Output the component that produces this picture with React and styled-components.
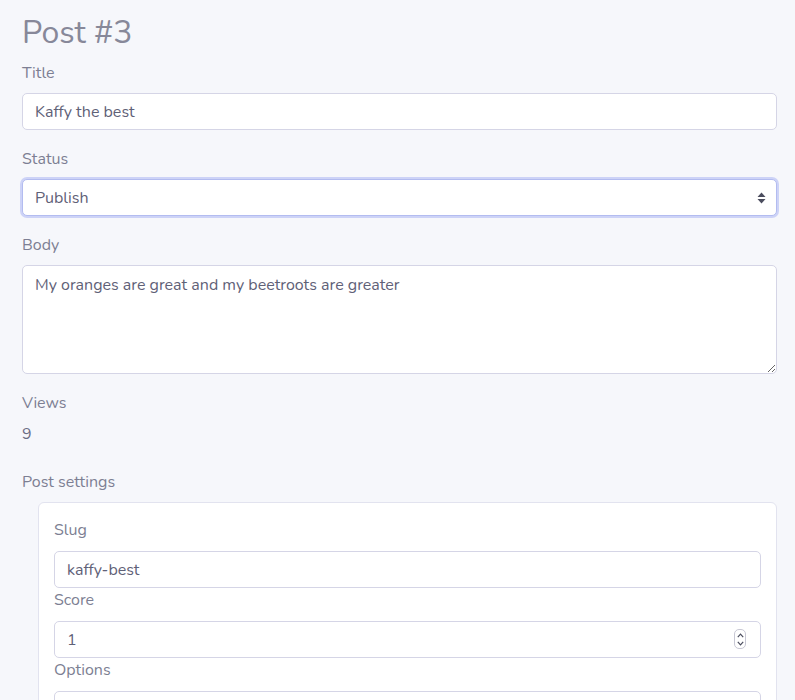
import React from "react";
import styled, { createGlobalStyle } from "styled-components";

const Global = createGlobalStyle`
  html, body { margin: 0; padding: 0; background: #f6f7fb; }
  body { font-family: "Nunito", Lato, "Noto Sans", sans-serif; color: #6b6d83; }
  * { box-sizing: border-box; }
`;

const Page = styled.div`
  padding: 13px 18px 40px 22px;
`;

const Heading = styled.h1`
  margin: 0 0 9px;
  font-size: 32px;
  line-height: 40px;
  font-weight: 400;
  color: #878899;
`;

const Field = styled.div`
  display: flex;
  flex-direction: column;
  margin-bottom: ${(p) => (p.$tight ? "1px" : "18px")};
`;

const Label = styled.label`
  font-size: 16px;
  line-height: 22px;
  color: #7d7f93;
  margin-bottom: ${(p) => (p.$tight ? "10px" : "9px")};
`;

const baseInput = `
  font-family: "Nunito", Lato, "Noto Sans", sans-serif;
  font-size: 16px;
  color: #5f6177;
  background: #fff;
  border: 1px solid #d5d5e6;
  border-radius: 5px;
  padding: 0 12px;
  outline: none;
  width: 100%;
`;

const Input = styled.input`
  ${baseInput}
  height: 37px;
  &::-webkit-inner-spin-button, &::-webkit-outer-spin-button { -webkit-appearance: none; margin: 0; }
`;

const SelectWrap = styled.div`
  position: relative;
`;

const Select = styled.select`
  ${baseInput}
  height: 37px;
  appearance: none;
  -webkit-appearance: none;
  border-color: #b3bcf0;
  box-shadow: 0 0 0 2px #cdd3f7;
`;

const SelectArrow = styled.svg`
  position: absolute;
  right: 11px;
  top: 13px;
  pointer-events: none;
`;

const TextArea = styled.textarea`
  ${baseInput}
  height: 109px;
  padding: 9px 12px;
  line-height: 20px;
  resize: vertical;
`;

const Value = styled.div`
  font-size: 16px;
  line-height: 22px;
  color: #6b6d83;
  padding-bottom: 8px;
`;

const Card = styled.div`
  margin-left: 16px;
  background: #fff;
  border: 1px solid #e2e3ef;
  border-radius: 6px;
  padding: 16px 15px 16px 15px;
`;

const NumberWrap = styled.div`
  position: relative;
`;

const Stepper = styled.div`
  position: absolute;
  right: 15px;
  top: 8px;
  width: 12px;
  height: 20px;
  border: 1px solid #c8c8d4;
  border-radius: 5px;
  background: #fff;
  display: flex;
  flex-direction: column;
  align-items: center;
  justify-content: center;
  gap: 3px;
`;

export default function App() {
  return (
    <>
      <Global />
      <Page>
        <Heading>Post #3</Heading>
        <Field>
          <Label>Title</Label>
          <Input defaultValue="Kaffy the best" />
        </Field>
        <Field>
          <Label>Status</Label>
          <SelectWrap>
            <Select defaultValue="publish">
              <option value="publish">Publish</option>
              <option value="draft">Draft</option>
            </Select>
            <SelectArrow width="9" height="12" viewBox="0 0 9 12">
              <path d="M4.5 0.5 L8.5 5 H0.5 Z M4.5 11.5 L0.5 7 H8.5 Z" fill="#4b4d5e" />
            </SelectArrow>
          </SelectWrap>
        </Field>
        <Field>
          <Label>Body</Label>
          <TextArea defaultValue="My oranges are great and my beetroots are greater" />
        </Field>
        <Field>
          <Label>Views</Label>
          <Value>9</Value>
        </Field>
        <Field>
          <Label>Post settings</Label>
          <Card>
            <Field $tight>
              <Label $tight>Slug</Label>
              <Input defaultValue="kaffy-best" />
            </Field>
            <Field $tight>
              <Label $tight>Score</Label>
              <NumberWrap>
                <Input type="number" defaultValue="1" />
                <Stepper>
                  <svg width="7" height="5" viewBox="0 0 7 5">
                    <path d="M0.8 4.2 L3.5 1.2 L6.2 4.2" stroke="#4b4d5e" strokeWidth="1.2" fill="none" />
                  </svg>
                  <svg width="7" height="5" viewBox="0 0 7 5">
                    <path d="M0.8 0.8 L3.5 3.8 L6.2 0.8" stroke="#4b4d5e" strokeWidth="1.2" fill="none" />
                  </svg>
                </Stepper>
              </NumberWrap>
            </Field>
            <Field $tight>
              <Label $tight>Options</Label>
              <Input defaultValue="" />
            </Field>
          </Card>
        </Field>
      </Page>
    </>
  );
}
